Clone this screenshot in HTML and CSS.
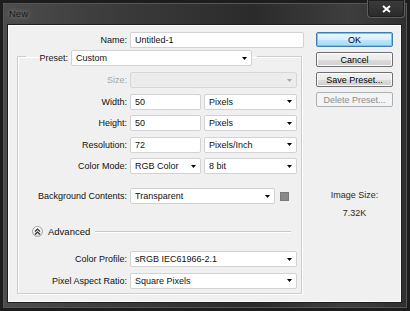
FILE: index.html
```html
<!DOCTYPE html>
<html lang="en">
    <head>
        <meta charset="UTF-8" />
        <title>New</title>
        <link rel="stylesheet" href="styles.css">
    </head>
    <body>
        <div class="window">
            <div class="titlebar">
                <span class="title">New</span>
                <span class="close">
                    <svg width="9" height="8" viewBox="0 0 9 8"><path d="M1 1 L8 7 M8 1 L1 7" stroke="#fff" stroke-width="2"/></svg>
                </span>
            </div>

            <div class="client">
                <div class="main">
                    <div class="row">
                        <span class="label name-label">Name:</span>
                        <input class="text w-name" type="text" value="Untitled-1" />
                    </div>

                    <fieldset class="group">
                        <legend class="legend">
                            <div class="legend-row">
                                <span class="label legend-label">Preset:</span>
                                <div class="select w-preset">
                                    <span>Custom</span>
                                    <svg class="arrow" width="5" height="3" viewBox="0 0 5 3"><path d="M0 0 H5 L2.5 3 Z" fill="#000"/></svg>
                                </div>
                            </div>
                        </legend>

                        <div class="rows">
                            <div class="row">
                                <span class="label disabled-label">Size:</span>
                                <div class="select w-full disabled">
                                    <span></span>
                                    <svg class="arrow" width="5" height="3" viewBox="0 0 5 3"><path d="M0 0 H5 L2.5 3 Z" fill="#a8a8a8"/></svg>
                                </div>
                            </div>
                            <div class="row">
                                <span class="label">Width:</span>
                                <input class="text w-num" type="text" value="50" />
                                <div class="select w-unit">
                                    <span>Pixels</span>
                                    <svg class="arrow" width="5" height="3" viewBox="0 0 5 3"><path d="M0 0 H5 L2.5 3 Z" fill="#000"/></svg>
                                </div>
                            </div>
                            <div class="row">
                                <span class="label">Height:</span>
                                <input class="text w-num" type="text" value="50" />
                                <div class="select w-unit">
                                    <span>Pixels</span>
                                    <svg class="arrow" width="5" height="3" viewBox="0 0 5 3"><path d="M0 0 H5 L2.5 3 Z" fill="#000"/></svg>
                                </div>
                            </div>
                            <div class="row">
                                <span class="label">Resolution:</span>
                                <input class="text w-num" type="text" value="72" />
                                <div class="select w-unit">
                                    <span>Pixels/Inch</span>
                                    <svg class="arrow" width="5" height="3" viewBox="0 0 5 3"><path d="M0 0 H5 L2.5 3 Z" fill="#000"/></svg>
                                </div>
                            </div>
                            <div class="row">
                                <span class="label">Color Mode:</span>
                                <div class="select w-num">
                                    <span>RGB Color</span>
                                    <svg class="arrow" width="5" height="3" viewBox="0 0 5 3"><path d="M0 0 H5 L2.5 3 Z" fill="#000"/></svg>
                                </div>
                                <div class="select w-unit">
                                    <span>8 bit</span>
                                    <svg class="arrow" width="5" height="3" viewBox="0 0 5 3"><path d="M0 0 H5 L2.5 3 Z" fill="#000"/></svg>
                                </div>
                            </div>

                            <div class="row bg-row">
                                <span class="label">Background Contents:</span>
                                <div class="select w-bg">
                                    <span>Transparent</span>
                                    <svg class="arrow" width="5" height="3" viewBox="0 0 5 3"><path d="M0 0 H5 L2.5 3 Z" fill="#000"/></svg>
                                </div>
                                <span class="swatch"></span>
                            </div>

                            <div class="advanced">
                                <span class="adv-icon">
                                    <svg width="7" height="7" viewBox="0 0 7 7"><path d="M1 3.5 L3.5 1 L6 3.5 M1 6.5 L3.5 4 L6 6.5" stroke="#333" stroke-width="1.2" fill="none"/></svg>
                                </span>
                                <span class="adv-text">Advanced</span>
                                <span class="adv-line"></span>
                            </div>

                            <div class="row profile-row">
                                <span class="label">Color Profile:</span>
                                <div class="select w-full">
                                    <span>sRGB IEC61966-2.1</span>
                                    <svg class="arrow" width="5" height="3" viewBox="0 0 5 3"><path d="M0 0 H5 L2.5 3 Z" fill="#000"/></svg>
                                </div>
                            </div>
                            <div class="row">
                                <span class="label">Pixel Aspect Ratio:</span>
                                <div class="select w-full">
                                    <span>Square Pixels</span>
                                    <svg class="arrow" width="5" height="3" viewBox="0 0 5 3"><path d="M0 0 H5 L2.5 3 Z" fill="#000"/></svg>
                                </div>
                            </div>
                        </div>
                    </fieldset>
                </div>

                <div class="side">
                    <button class="btn btn-default">OK</button>
                    <button class="btn">Cancel</button>
                    <button class="btn">Save Preset...</button>
                    <button class="btn" disabled>Delete Preset...</button>

                    <div class="image-size">
                        <p>Image Size:</p>
                        <p class="size-value">7.32K</p>
                    </div>
                </div>
            </div>
        </div>
    </body>
</html>
```

FILE: styles.css
```css
* {
    box-sizing: border-box;
}

body {
    margin: 0;
    background: #1c1c1c;
    font-family: "Liberation Sans", Arial, sans-serif;
    font-size: 9px;
    color: #111;
}

.window {
    width: 410px;
    height: 311px;
    display: flex;
    flex-direction: column;
    padding: 0 9px 9px 8px;
    background: linear-gradient(to right, #4d4d4d 0%, #3a3a3a 30%, #2b2b2b 62%, #3e3e3e 85%, #2e2e2e 100%);
    box-shadow: inset 0 0 0 3px #1d1d1d, inset 0 0 0 4px #575757;
}

.titlebar {
    height: 25px;
    display: flex;
    align-items: flex-start;
}

.title {
    margin: 8px 0 0 1px;
    color: #161616;
    font-size: 9.5px;
    line-height: 11px;
    text-shadow: 0 0 5px rgba(255, 255, 255, 0.5);
}

.close {
    margin-left: auto;
    margin-right: -4px;
    width: 38px;
    height: 18px;
    display: flex;
    align-items: center;
    justify-content: center;
    border: 1px solid #5e5e5e;
    border-top: none;
    border-radius: 0 0 4px 4px;
    background: linear-gradient(#3c3c3c, #2a2a2a);
    box-shadow: inset 0 0 0 1px #1f1f1f;
}

.client {
    flex: 1;
    display: flex;
    background: #f0f0f0;
    border: 1px solid #fbfbfb;
    box-shadow: 0 0 0 1px #1f1f1f;
}

.main {
    width: 299px;
    padding: 6px 0 0 8px;
}

.row {
    display: flex;
    align-items: center;
    gap: 3px;
    height: 16px;
}

.label {
    width: 109px;
    text-align: right;
    white-space: nowrap;
}

.name-label {
    width: 110px;
}

.disabled-label {
    color: #a6a6a6;
}

.text,
.select {
    height: 16px;
    border: 1px solid #d2d2d2;
    border-radius: 2px;
    background: #fff;
    font: inherit;
    color: #111;
    padding: 0 0 0 4px;
    line-height: 14px;
}

.text {
    outline: none;
}

.select {
    display: flex;
    align-items: center;
}

.select span {
    flex: 1;
    white-space: nowrap;
}

.arrow {
    margin-right: 4px;
}

.select.disabled {
    background: #ececec;
    border-color: #d6d6d6;
}

.w-name {
    width: 174px;
}

.w-preset {
    width: 181px;
}

.w-full {
    width: 167px;
}

.w-num {
    width: 71px;
}

.w-unit {
    width: 93px;
}

.w-bg {
    width: 145px;
}

.swatch {
    width: 9px;
    height: 9px;
    margin-left: 2px;
    background: #8a8a8a;
    border: 1px solid #7a7a7a;
}

.group {
    margin: -2px 0 0 0;
    padding: 0 3px 4px 0;
    width: 285px;
    border: 1px solid #cdcdcd;
    box-shadow: inset 1px 1px 0 #fff, 1px 1px 0 #fff;
}

.legend {
    margin-left: 8px;
    padding: 4px 5px 0 0;
}

.legend-row {
    display: flex;
    align-items: center;
    gap: 3px;
    height: 16px;
}

.legend-label {
    width: 42px;
}

.rows {
    display: flex;
    flex-direction: column;
    gap: 5.5px;
    padding-top: 6px;
}

.bg-row {
    margin-top: 8.5px;
}

.advanced {
    display: flex;
    align-items: center;
    height: 11px;
    margin: 16.5px 7px 0 14px;
}

.adv-icon {
    width: 11px;
    height: 11px;
    border-radius: 50%;
    border: 1px solid #a3a3a3;
    background: linear-gradient(#ffffff, #dedede);
    display: flex;
    align-items: center;
    justify-content: center;
}

.adv-text {
    margin-left: 5px;
    font-size: 9.5px;
}

.adv-line {
    flex: 1;
    margin-left: 5px;
    height: 2px;
    border-top: 1px solid #c9c9c9;
    border-bottom: 1px solid #fff;
}

.profile-row {
    margin-top: 8.5px;
}

.side {
    width: 77px;
    margin-left: 8px;
    padding-top: 6px;
    display: flex;
    flex-direction: column;
    gap: 5px;
}

.btn {
    height: 15px;
    padding: 0;
    font: inherit;
    color: #000;
    border: 1px solid #707070;
    border-radius: 2px;
    background: linear-gradient(#f2f2f2 0%, #ebebeb 50%, #dddddd 50%, #cfcfcf 100%);
    box-shadow: inset 0 0 0 1px #fcfcfc;
}

.btn-default {
    border-color: #3c7fb1;
    background: linear-gradient(#eaf6fd 0%, #d9f0fc 50%, #bee6fd 50%, #a7d9f5 100%);
    box-shadow: inset 0 0 0 1px #48d8fb;
}

.btn:disabled {
    color: #8d8d8d;
    border-color: #adb2b5;
    background: #f4f4f4;
    box-shadow: none;
}

.image-size {
    margin-top: 78px;
    text-align: center;
    color: #2a2a2a;
}

.image-size p {
    margin: 0;
    line-height: 11px;
}

.image-size .size-value {
    margin-top: 7px;
}
```
